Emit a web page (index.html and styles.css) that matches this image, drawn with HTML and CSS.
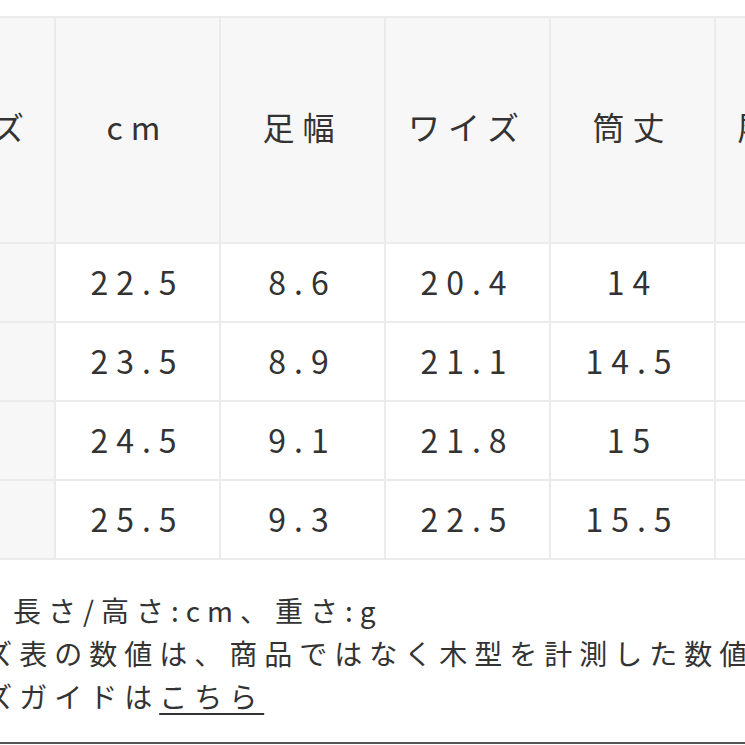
FILE: index.html
```html
<!DOCTYPE html>
<html lang="ja">
<head>
<meta charset="utf-8">
<title>サイズ表</title>
<link rel="stylesheet" href="styles.css">
</head>
<body>
<div class="sheet">
  <table class="size-table">
    <thead>
      <tr>
        <th class="head">サイズ</th>
        <th class="head">cm</th>
        <th class="head">足幅</th>
        <th class="head">ワイズ</th>
        <th class="head">筒丈</th>
        <th class="head">履き口</th>
      </tr>
    </thead>
    <tbody>
      <tr><th class="label">S</th><td>22.5</td><td>8.6</td><td>20.4</td><td>14</td><td>32</td></tr>
      <tr><th class="label">M</th><td>23.5</td><td>8.9</td><td>21.1</td><td>14.5</td><td>33</td></tr>
      <tr><th class="label">L</th><td>24.5</td><td>9.1</td><td>21.8</td><td>15</td><td>34</td></tr>
      <tr><th class="label">LL</th><td>25.5</td><td>9.3</td><td>22.5</td><td>15.5</td><td>35</td></tr>
    </tbody>
  </table>
  <div class="notes">
    <p class="note">単位: 長さ/高さ:cm、重さ:g</p>
    <p class="note">サイズ表の数値は、商品ではなく木型を計測した数値です。</p>
    <p class="note">サイズガイドは<a class="link" href="#">こちら</a></p>
  </div>
  <div class="divider"></div>
</div>
</body>
</html>
```
FILE: styles.css
```css
html, body {
  margin: 0;
  padding: 0;
  background: #ffffff;
  overflow: hidden;
}
body {
  width: 745px;
  height: 745px;
  font-family: "Noto Sans CJK JP", "Noto Sans", sans-serif;
  color: #333333;
}
.sheet {
  margin-left: -111px;
  padding-top: 16px;
  width: 1000px;
}
.size-table {
  border-collapse: separate;
  border-spacing: 2px;
  background: #ebebeb;
  table-layout: fixed;
  width: 992px;
}
.size-table th,
.size-table td {
  width: 163px;
  padding: 0;
  text-align: center;
  vertical-align: middle;
  font-size: 32px;
  font-weight: 400;
  letter-spacing: 8px;
  color: #333333;
}
.size-table .head {
  height: 216px;
  padding-bottom: 8px;
  background: #f7f7f7;
}
.size-table .label {
  background: #f7f7f7;
}
.size-table td {
  height: 73px;
  padding-bottom: 4px;
  background: #ffffff;
}
.notes {
  margin-top: 29px;
  padding-left: 26px;
}
.note {
  margin: 0;
  font-size: 28px;
  line-height: 43px;
  letter-spacing: 7px;
  white-space: nowrap;
  color: #333333;
}
.link {
  color: #333333;
  text-decoration: underline;
  text-decoration-thickness: 2px;
  text-underline-offset: 5px;
}
.divider {
  margin-top: 24px;
  height: 2px;
  background: #555555;
}
```
